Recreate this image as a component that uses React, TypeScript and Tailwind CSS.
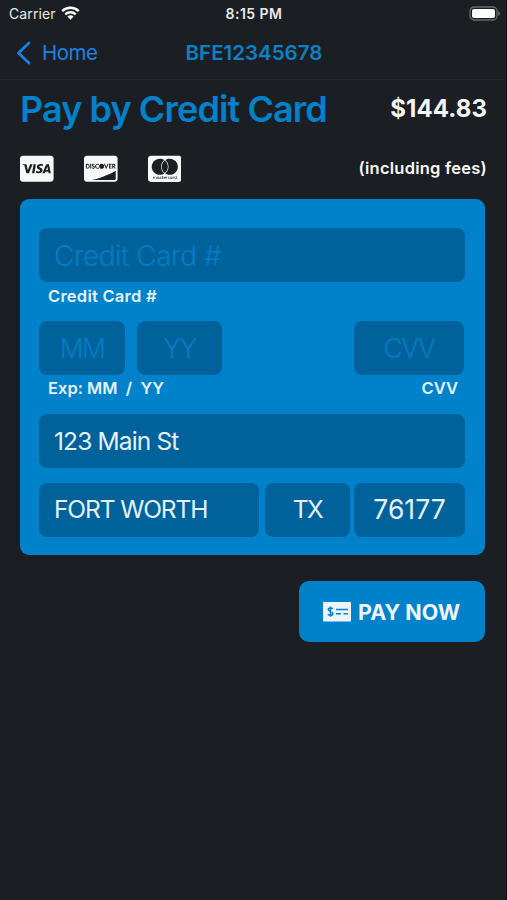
import React from "react";
import { FaCcVisa, FaCcDiscover, FaCcMastercard } from "react-icons/fa";

const field = "flex h-[54px] items-center rounded-lg bg-[#00629a] leading-none";

function StatusBar() {
  return (
    <div className="grid h-7 grid-cols-[1fr_auto_1fr] items-center text-[14px] leading-none text-[#e8e9ea]">
      <div className="flex items-center gap-[5px] pl-[9px]">
        <span className="tracking-[0.1px]">Carrier</span>
        <svg width="19" height="14" viewBox="0 0 19 14" fill="none" stroke="#fff" className="mb-0.5">
          <path d="M1.2 5.2a11.8 11.8 0 0 1 16.6 0" strokeWidth="2.4" />
          <path d="M4.3 8.4a7.4 7.4 0 0 1 10.4 0" strokeWidth="2.3" />
          <path d="M6.4 10.6a4.4 4.4 0 0 1 6.2 0l-3.1 3.2z" fill="#fff" stroke="none" />
        </svg>
      </div>
      <span className="pl-0.5 font-semibold tracking-[0.45px]">8:15 PM</span>
      <div className="flex justify-end pb-0.5 pr-[5px]">
        <svg width="32" height="15" viewBox="0 0 32 15">
          <rect x="1" y="1" width="27" height="13" rx="4" fill="#1c1f24" stroke="#66696c" strokeWidth="1.3" />
          <rect x="3" y="3" width="23" height="9" rx="2" fill="#fff" />
          <path d="M29.3 5v5c2-.8 2-4.2 0-5z" fill="#77797b" />
        </svg>
      </div>
    </div>
  );
}

function NavBar() {
  return (
    <div className="grid h-[52px] grid-cols-[1fr_auto_1fr] items-center border-b border-[#25282c] pb-0.5 text-[20.5px] leading-none">
      <div className="flex items-center gap-[11px] pl-4 text-[#1b82e6]">
        <svg width="15" height="24" viewBox="0 0 15 24" fill="none" stroke="currentColor" strokeWidth="2.7" strokeLinecap="round" strokeLinejoin="round">
          <path d="M13 2 2.5 12 13 22" />
        </svg>
        <span className="pt-0.5 tracking-[-0.5px]">Home</span>
      </div>
      <span className="pl-0.5 pt-0.5 font-semibold text-[#0e80c4]">BFE12345678</span>
    </div>
  );
}

function CheckIcon() {
  return (
    <svg width="28" height="20" viewBox="0 0 28 20" fill="none">
      <rect width="28" height="19.5" rx="0.8" fill="#edf5fb" />
      <g stroke="#0082cb" strokeWidth="1.5">
        <path d="M9.8 6.8C9.3 6.1 8.5 5.9 7.5 5.9 6.1 5.9 5.2 6.5 5.2 7.6c0 2.4 4.7 1.4 4.7 3.9 0 1.2-1 1.8-2.4 1.8-1.1 0-2-.3-2.6-1M7.5 4.5v10.2" strokeWidth="1.5" />
        <path d="M13 7.5h12M13 11.7h5M20.5 11.7H25" />
      </g>
    </svg>
  );
}

export default function App() {
  return (
    <div className="h-[900px] w-[507px] overflow-hidden border-r border-[#0b0d0f] bg-[#1b1f23] font-['Inter','Liberation_Sans',sans-serif]">
      <StatusBar />
      <NavBar />
      <main className="pl-5 pr-[19px]">
        <div className="flex h-[58px] items-center justify-between whitespace-nowrap leading-none">
          <h1 className="text-[36px] font-semibold tracking-[-0.92px] text-[#0082cb]">Pay by Credit Card</h1>
          <span className="text-[24px] font-bold tracking-[0.1px] text-[#f5f5f6]">$144.83</span>
        </div>
        <div className="flex h-[61px] items-center justify-between text-[#f8f8f9]">
          <div className="flex gap-[30px] pl-[0.4px]">
            <FaCcVisa size={33.6} />
            <FaCcDiscover size={33.6} />
            <FaCcMastercard size={33.6} />
          </div>
          <span className="text-[16.5px] font-semibold leading-none tracking-[0.24px]">(including fees)</span>
        </div>

        <section className="mr-0.5 flex h-[356px] flex-col rounded-[9px] bg-[#0082cb] pl-[19px] pr-5 pt-[29px] text-[#e4f2fa]">
          <div className={`${field} pl-[15px] pt-0.5 text-[28px] font-light tracking-[-0.5px] text-[#007dc4]`}>Credit Card #</div>
          <div className="flex h-[39px] items-center pb-[11px] pl-[9px] text-[16.5px] font-semibold leading-none tracking-[0.25px]">Credit Card #</div>
          <div className="flex text-[26.5px] font-light tracking-[-1.5px] text-[#007dc4]">
            <div className={`${field} w-[86px] justify-center`}>MM</div>
            <div className={`${field} ml-3 w-[85px] justify-center`}>YY</div>
            <div className={`${field} ml-auto mr-px w-[110px] justify-center`}>CVV</div>
          </div>
          <div className="flex h-[39px] items-center justify-between whitespace-pre pb-3 pl-[9px] pr-[7px] text-[16.5px] font-semibold leading-none">
            <span>Exp: MM  /  YY</span>
            <span>CVV</span>
          </div>
          <div className={`${field} pl-[15px] text-[24.5px] tracking-[-0.85px]`}>123 Main St</div>
          <div className="mt-[14.5px] flex text-[24.5px]">
            <div className={`${field} w-[220px] pl-[15px] tracking-[-1.1px]`}>FORT WORTH</div>
            <div className={`${field} ml-1.5 w-[85px] justify-center tracking-[-1.5px]`}>TX</div>
            <div className={`${field} ml-1 w-[111px] justify-center text-[26.5px]`}>76177</div>
          </div>
        </section>

        <button className="ml-auto mr-0.5 mt-[26px] flex h-[61px] w-[186px] items-center gap-[7px] rounded-[10px] bg-[#0082cb] pl-6 text-[21.5px] font-bold leading-none text-[#edf5fb]">
          <CheckIcon />
          <span className="whitespace-nowrap pt-0.5">PAY NOW</span>
        </button>
      </main>
    </div>
  );
}
